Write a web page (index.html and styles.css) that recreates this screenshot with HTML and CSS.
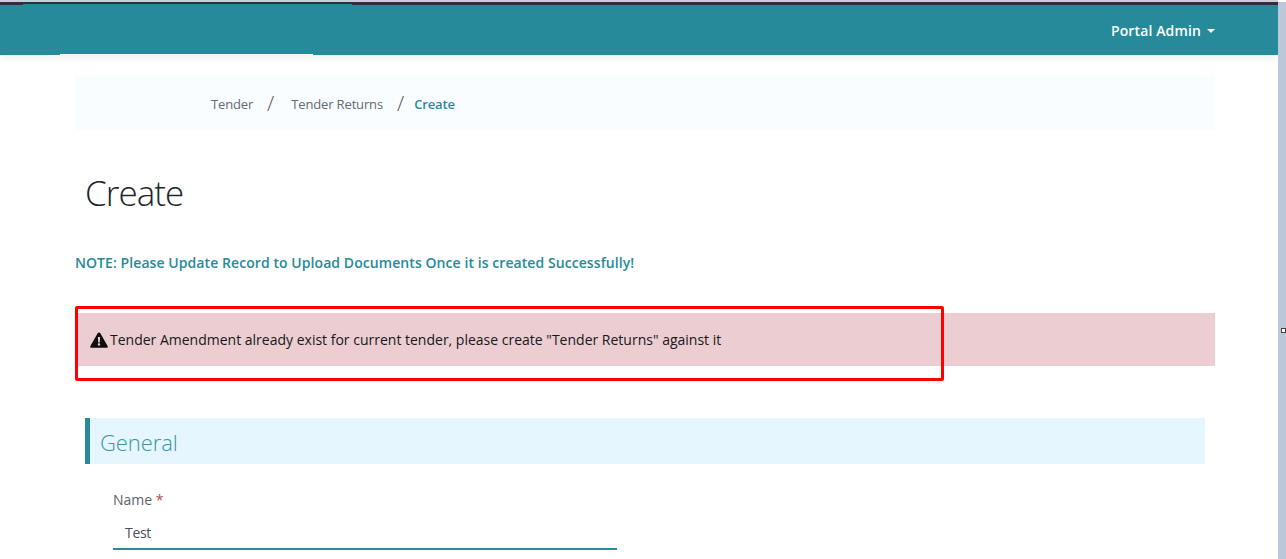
FILE: index.html
```html
<!DOCTYPE html>
<html lang="en">
<head>
<meta charset="utf-8">
<title>Create</title>
<link rel="stylesheet" href="styles.css">
</head>
<body>
<div class="window">
  <div class="page">
    <div class="topline"><span class="topline-tab"></span></div>
    <header class="navbar">
      <span class="nav-underline"></span>
      <a class="user-menu">Portal Admin<span class="caret"></span></a>
    </header>
    <main class="content">
      <nav class="breadcrumb">
        <span class="crumb">Tender</span>
        <span class="sep sep-first">/</span>
        <span class="crumb">Tender Returns</span>
        <span class="sep sep-second">/</span>
        <span class="crumb-active">Create</span>
      </nav>
      <h1 class="title">Create</h1>
      <p class="note">NOTE: Please Update Record to Upload Documents Once it is created Successfully!</p>
      <div class="alert">
        <svg class="alert-icon" viewBox="0 0 18 16" aria-hidden="true"><path fill-rule="evenodd" d="M9 0.4 C9.5 0.4 9.9 0.6 10.2 1.1 L17.6 14 C18.1 14.9 17.6 15.8 16.6 15.8 L1.4 15.8 C0.4 15.8 -0.1 14.9 0.4 14 L7.8 1.1 C8.1 0.6 8.5 0.4 9 0.4 Z M7.9 5 L8.2 10.4 L9.8 10.4 L10.1 5 Z M9 11.3 C8.3 11.3 7.8 11.8 7.8 12.5 C7.8 13.2 8.3 13.7 9 13.7 C9.7 13.7 10.2 13.2 10.2 12.5 C10.2 11.8 9.7 11.3 9 11.3 Z"/></svg>
        <span>Tender Amendment already exist for current tender, please create "Tender Returns" against it</span>
      </div>
      <section class="card">
        <h2 class="section-title">General</h2>
        <div class="field">
          <label class="field-label">Name <span class="required">*</span></label>
          <div class="field-input">Test</div>
        </div>
      </section>
    </main>
    <div class="annotation"></div>
  </div>
  <aside class="scrollbar"><span class="scroll-handle"></span></aside>
</div>
</body>
</html>
```

FILE: styles.css
```css
* { box-sizing: border-box; }
html, body { margin: 0; padding: 0; height: 100%; overflow: hidden; background: #fff; }
body { font-family: "Open Sans", "Noto Sans", sans-serif; }

.window { display: flex; width: 1286px; height: 559px; overflow: hidden; }
.page { position: relative; width: 1278px; flex: none; height: 559px; overflow: hidden; background: #fff; }
.scrollbar { position: relative; flex: 1; background: #bcc7da; margin-top: 2px; }
.scroll-handle { position: absolute; left: 3px; top: 326px; width: 5px; height: 5px; background: #fff; border: 1px solid #444; }

.topline { position: relative; height: 5px; background: linear-gradient(#c9d0de 0 2px, #2f3238 2px 5px); }
.topline-tab { position: absolute; left: 23px; top: 4px; width: 329px; height: 1px; background: #268a9a; }

.navbar {
  position: relative;
  height: 50px;
  background: #268a9a;
  display: flex;
  align-items: center;
  justify-content: flex-end;
  padding: 1px 63px 0 0;
  box-shadow: 0 2px 10px rgba(38, 70, 80, .10);
}
.nav-underline { position: absolute; left: 60px; bottom: 0; width: 253px; height: 1px; background: #fff; }
.user-menu { color: #fff; font-size: 14px; font-weight: 600; line-height: 20px; display: flex; align-items: center; letter-spacing: .13px; }
.caret { margin-left: 6px; width: 0; height: 0; border-left: 4px solid transparent; border-right: 4px solid transparent; border-top: 4px solid #fff; }

.content { padding: 20px 63px 0 75px; }

.breadcrumb {
  height: 55px;
  background: #fafdff;
  display: flex;
  align-items: center;
  padding: 2px 0 0 136px;
  font-size: 13px;
  color: #636a72;
  letter-spacing: -.15px;
}
.sep { font-size: 21px; font-weight: 300; line-height: 20px; color: #555; letter-spacing: 0; position: relative; top: -1px; }
.sep-first { margin: 0 17px 0 14px; }
.sep-second { margin: 0 10px 0 14px; }
.crumb-active { color: #268a9a; font-weight: 600; }

.title { margin: 39px 0 0 10px; font-size: 35px; line-height: 48px; font-weight: 300; color: #212529; letter-spacing: -.95px; }

.note { margin: 36px 0 0; font-size: 14px; line-height: 20px; font-weight: 600; color: #268a9a; letter-spacing: .07px; }

.alert {
  margin-top: 40px;
  height: 53px;
  background: #eccdd1;
  display: flex;
  align-items: center;
  padding-left: 15px;
  font-size: 14px;
  color: #16181c;
}
.alert-icon { width: 18px; height: 16px; margin-right: 2px; fill: #0e0e0e; flex: none; }

.card { margin-top: 52px; padding: 0 10px; }
.section-title {
  margin: 0;
  height: 46px;
  background: #e5f6fe;
  border-left: 5px solid #268a9a;
  padding-left: 10px;
  font-size: 22px;
  line-height: 49px;
  font-weight: 300;
  color: #3a95a4;
  letter-spacing: -.1px;
}

.field { margin: 26px 0 0 28px; width: 504px; }
.field-label { display: block; font-size: 14px; line-height: 20px; color: #5c636a; }
.required { color: #b04a5a; }
.field-input {
  margin-top: 8px;
  height: 32px;
  padding: 0 12px;
  border-bottom: 2px solid #268a9a;
  font-size: 14px;
  line-height: 30px;
  color: #495057;
  letter-spacing: -.3px;
}

.annotation { position: absolute; left: 75px; top: 306px; width: 869px; height: 75px; border: 3px solid #f00; border-radius: 2px; pointer-events: none; }
```
